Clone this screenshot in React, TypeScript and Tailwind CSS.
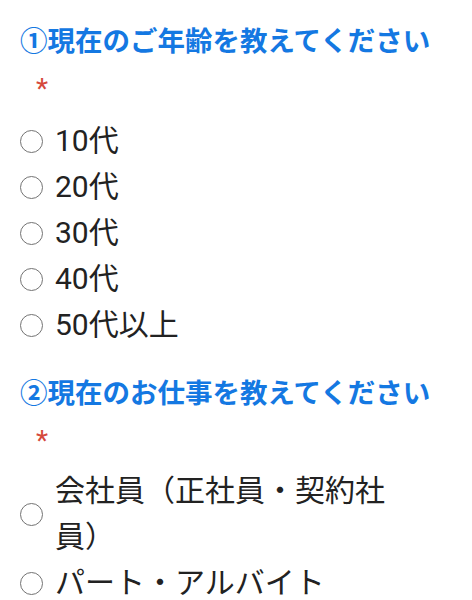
import React from "react";

const font = { fontFamily: 'Roboto, "Noto Sans CJK JP", sans-serif' };

function Radio({ label }: { label: string }) {
  return (
    <label className="flex items-center">
      <span className="w-[23px] h-[23px] shrink-0 rounded-full border-[1.5px] border-[#737373] bg-white" />
      <span className="ml-[12px] max-w-[350px] text-[30px] leading-[46px] text-[#222222]">{label}</span>
    </label>
  );
}

function Question({ title, options, first }: { title: string; options: string[]; first?: boolean }) {
  return (
    <section className={first ? "" : "mt-[24px]"}>
      <h2 className="text-[27.5px] leading-[44px] h-[44px] font-bold text-[#1478e2] whitespace-nowrap">{title}</h2>
      <div className="h-[44px] pl-[16px] flex items-center">
        <span className="text-[28px] leading-none text-[#d5493c] pt-[6px]">*</span>
      </div>
      <div className={first ? "mt-[10px] flex flex-col" : "mt-[8px] flex flex-col"}>
        {options.map((o) => (
          <Radio key={o} label={o} />
        ))}
      </div>
    </section>
  );
}

export default function App() {
  return (
    <div className="w-[472px] h-[600px] overflow-hidden bg-white pt-[20px] pl-[20px]" style={font}>
      <Question first title="①現在のご年齢を教えてください" options={["10代", "20代", "30代", "40代", "50代以上"]} />
      <Question title="②現在のお仕事を教えてください" options={["会社員（正社員・契約社員）", "パート・アルバイト"]} />
    </div>
  );
}
